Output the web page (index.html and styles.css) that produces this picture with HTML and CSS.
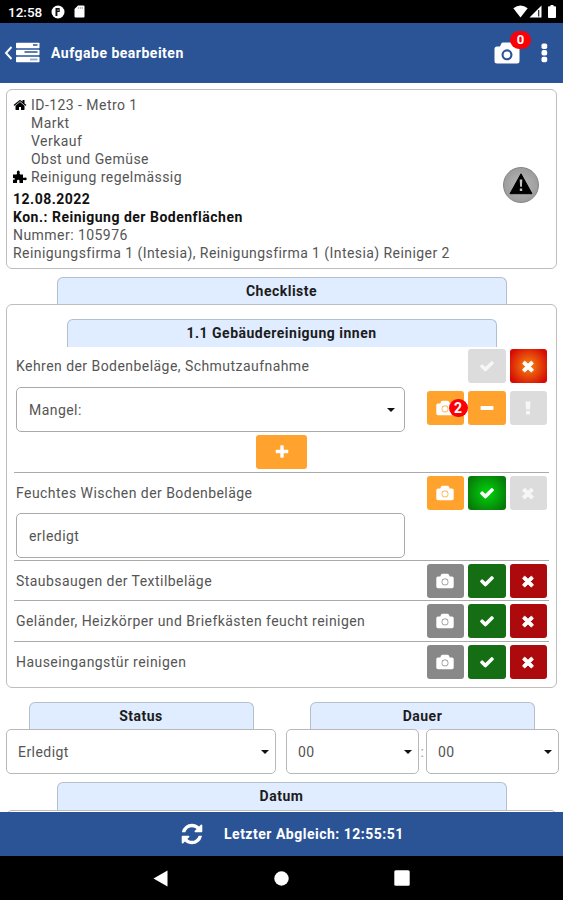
FILE: index.html
```html
<!DOCTYPE html>
<html lang="de">
<head>
<meta charset="utf-8">
<title>Aufgabe bearbeiten</title>
<link rel="stylesheet" href="styles.css">
</head>
<body>
<svg class="defs" width="0" height="0">
  <symbol id="check" viewBox="0 0 1792 1792"><path d="M1671 566q0 40-28 68l-724 724-136 136q-28 28-68 28t-68-28l-136-136-362-362q-28-28-28-68t28-68l136-136q28-28 68-28t68 28l294 295 656-657q28-28 68-28t68 28l136 136q28 28 28 68z"/></symbol>
  <symbol id="times" viewBox="0 0 1792 1792"><path stroke="#fff" stroke-width="90" d="M1490 1322q0 40-28 68l-136 136q-28 28-68 28t-68-28l-294-294-294 294q-28 28-68 28t-68-28l-136-136q-28-28-28-68t28-68l294-294-294-294q-28-28-28-68t28-68l136-136q28-28 68-28t68 28l294 294 294-294q28-28 68-28t68 28l136 136q28 28 28 68t-28 68l-294 294 294 294q28 28 28 68z"/></symbol>
  <symbol id="plus" viewBox="0 0 1792 1792"><path d="M1600 736v192q0 40-28 68t-68 28h-416v416q0 40-28 68t-68 28h-192q-40 0-68-28t-28-68v-416h-416q-40 0-68-28t-28-68v-192q0-40 28-68t68-28h416v-416q0-40 28-68t68-28h192q40 0 68 28t28 68v416h416q40 0 68 28t28 68z"/></symbol>
  <symbol id="minus" viewBox="0 0 16 16"><rect x="1.5" y="6" width="13" height="4" rx="1"/></symbol>
  <symbol id="bang" viewBox="0 0 16 16"><path d="M6 1.5h4q.5 0 .5.6L10 9.5H6L5.500 2.100q0-.6.5-.6zM6 11h4v3.500H6z"/></symbol>
  <symbol id="camera" viewBox="0 0 26 22"><path fill-rule="evenodd" d="M9 .5h8q1.300 0 1.800 1.200L20 4.500h3q2.500 0 2.500 2.500v12q0 2.500-2.500 2.500H3Q.5 21.500.5 19V7Q.5 4.500 3 4.500h3l1.200-2.800Q7.700.5 9 .5zM13 7.300a5.500 5.500 0 1 0 0 11a5.500 5.500 0 0 0 0-11zM13 9.400a3.400 3.400 0 1 1 0 6.800a3.400 3.400 0 0 1 0-6.800z"/></symbol>
  <symbol id="camera-thin" viewBox="0 0 18 16"><path fill-rule="evenodd" d="M6.500.7h5q1 0 1.500 1l.7 1.700H16q1.700 0 1.700 1.700v8.500q0 1.700-1.700 1.700H2Q.3 15.300.3 13.600V5.100Q.3 3.400 2 3.400h2.300L5 1.700q.5-1 1.500-1zM9 5.500a3.400 3.400 0 1 0 0 6.800a3.400 3.400 0 0 0 0-6.800zM9 6.200a2.700 2.700 0 1 1 0 5.400a2.700 2.700 0 0 1 0-5.400z"/></symbol>
</svg>
<div class="app">
  <div class="status">
    <span class="clock">12:58</span>
    <svg class="s-app" width="14" height="14" viewBox="0 0 14 14"><circle cx="7" cy="7" r="6.500" fill="#fff"/><path d="M4.500 3h4.200v4H6.400v4H4.500z" fill="#111"/><path d="M6.500 4.500h1v1.200h-1z" fill="#fff"/></svg>
    <svg width="11" height="13" viewBox="0 0 11 13"><path d="M4 .5h5.500q1 0 1 1v10q0 1-1 1h-8q-1 0-1-1V4z" fill="#fff"/><path d="M4.300 2v2M6.300 2v2M8.300 2v2" stroke="#999" stroke-width=".8"/></svg>
    <span class="grow"></span>
    <svg width="15" height="13" viewBox="0 0 15 13"><path d="M.3 3.300Q7.500-2.300 14.700 3.300L7.500 12.500z" fill="#fff"/></svg>
    <svg class="s-cell" width="13" height="13" viewBox="0 0 13 13"><path d="M.5 12.500L12.500.5v12z" fill="#fff"/><path d="M9.700 5v6.500" stroke="#222" stroke-width="1.200"/></svg>
    <svg class="s-bat" width="8" height="13" viewBox="0 0 8 13"><path d="M2.500 0h3v1.300H7q1 0 1 1V12q0 1-1 1H1q-1 0-1-1V2.300q0-1 1-1h1.500z" fill="#fff"/></svg>
  </div>
  <header class="bar">
    <svg width="36" height="22" viewBox="0 0 36 22"><path d="M7.500 5L2 11l5.500 6" fill="none" stroke="#fff" stroke-width="1.900"/><g fill="#fff"><rect x="12" y=".8" width="23.500" height="5.400" rx=".8"/><rect x="12" y="7.800" width="23.500" height="5.400" rx=".8"/><rect x="12" y="14.800" width="23.500" height="5.400" rx=".8"/></g><path d="M29 3h4.500M20.500 10h13" stroke="#2b5497" stroke-width="1.400"/><path d="M26 17.500h7.500" stroke="#8fa9d3" stroke-width="1.800"/></svg>
    <h1>Aufgabe bearbeiten</h1>
    <span class="grow"></span>
    <span class="cam"><svg width="26" height="22" fill="#fff"><use href="#camera"/></svg><b class="badge">0</b></span>
    <svg class="dots" width="7" height="20" viewBox="0 0 7 20" fill="#fff"><rect x=".5" y=".5" width="5.700" height="5.500" rx="1.800"/><rect x=".5" y="7.100" width="5.700" height="5.500" rx="1.800"/><rect x=".5" y="13.700" width="5.700" height="5.500" rx="1.800"/></svg>
  </header>
  <main>
    <section class="card info">
      <div class="lines">
        <p><svg class="ic" width="14" height="14" viewBox="0 0 1792 1792"><path d="M1472 992v480q0 26-19 45t-45 19h-384v-384h-256v384h-384q-26 0-45-19t-19-45v-480q0-1 .5-3t.5-3l575-474 575 474q1 2 1 6zm223-69l-62 74q-8 9-21 11h-3q-13 0-21-7l-692-577-692 577q-12 8-24 7-13-2-21-11l-62-74q-8-10-7-23.500t11-21.500l719-599q32-26 76-26t76 26l244 204v-195q0-14 9-23t23-9h192q14 0 23 9t9 23v408l219 182q10 8 11 21.500t-7 23.500z"/></svg><span>ID-123 - Metro 1</span></p>
        <p class="in">Markt</p>
        <p class="in">Verkauf</p>
        <p class="in">Obst und Gemüse</p>
        <p><svg class="ic" width="14" height="14" viewBox="0 0 14 14"><path d="M0 4.500h3.500Q4.600 3.800 3.800 2.300Q3.900.5 5.300.5t1.500 1.800Q6 3.800 7.200 4.500H10v3q1 .8 1.800 0q1.700-.4 1.900 1.200t-1.900 1.500q-.8-.9-1.800 0v2.800H6.800q-.8-.9-.3-1.800q.2-1.400-1.200-1.400t-1.300 1.400q.6.900-.3 1.800H0V9.800q1.800.3 1.800-.9T0 8.200z"/></svg><span>Reinigung regelmässig</span></p>
        <p class="strong gap">12.08.2022</p>
        <p class="strong">Kon.: Reinigung der Bodenflächen</p>
        <p>Nummer: 105976</p>
        <p class="firms">Reinigungsfirma 1 (Intesia), Reinigungsfirma 1 (Intesia) Reiniger 2</p>
      </div>
      <span class="warn"><svg width="24" height="22" viewBox="0 0 24 22"><path d="M12 .8L23 20.700H1z" stroke="#000" stroke-linejoin="round"/><path d="M10.700 6.500h2.600l-.4 7.300h-1.800zM10.800 15.500h2.400V18h-2.400z" fill="#c4c4c4"/></svg></span>
    </section>
    <h2 class="tab wide">Checkliste</h2>
    <section class="card list">
      <h2 class="tab inner">1.1 Gebäudereinigung innen</h2>
      <div class="item first">
        <div class="row"><span>Kehren der Bodenbeläge, Schmutzaufnahme</span>
          <div class="btns"><i class="btn off"><svg><use href="#check"/></svg></i><i class="btn hot"><svg><use href="#times"/></svg></i></div></div>
        <div class="row field"><div class="box sel"><span>Mangel:</span><em></em></div>
          <div class="btns"><i class="btn org"><svg class="cm"><use href="#camera-thin"/></svg><b class="badge two">2</b></i><i class="btn org"><svg><use href="#minus"/></svg></i><i class="btn off"><svg><use href="#bang"/></svg></i></div></div>
        <i class="btn org add"><svg><use href="#plus"/></svg></i>
      </div>
      <div class="item second">
        <div class="row"><span>Feuchtes Wischen der Bodenbeläge</span>
          <div class="btns"><i class="btn org"><svg class="cm"><use href="#camera-thin"/></svg></i><i class="btn lit"><svg><use href="#check"/></svg></i><i class="btn off"><svg><use href="#times"/></svg></i></div></div>
        <div class="box">erledigt</div>
      </div>
      <div class="item"><div class="row"><span>Staubsaugen der Textilbeläge</span>
        <div class="btns"><i class="btn gry"><svg class="cm"><use href="#camera-thin"/></svg></i><i class="btn grn"><svg><use href="#check"/></svg></i><i class="btn red"><svg><use href="#times"/></svg></i></div></div></div>
      <div class="item"><div class="row"><span>Geländer, Heizkörper und Briefkästen feucht reinigen</span>
        <div class="btns"><i class="btn gry"><svg class="cm"><use href="#camera-thin"/></svg></i><i class="btn grn"><svg><use href="#check"/></svg></i><i class="btn red"><svg><use href="#times"/></svg></i></div></div></div>
      <div class="item"><div class="row"><span>Hauseingangstür reinigen</span>
        <div class="btns"><i class="btn gry"><svg class="cm"><use href="#camera-thin"/></svg></i><i class="btn grn"><svg><use href="#check"/></svg></i><i class="btn red"><svg><use href="#times"/></svg></i></div></div></div>
    </section>
    <div class="cols">
      <div class="col"><h2 class="tab half">Status</h2><div class="box sel status-box"><span>Erledigt</span><em></em></div></div>
      <div class="col dauer"><h2 class="tab half">Dauer</h2>
        <div class="time"><div class="box sel"><span>00</span><em></em></div><span class="colon">:</span><div class="box sel"><span>00</span><em></em></div></div></div>
    </div>
    <h2 class="tab wide datum">Datum</h2>
    <section class="card"></section>
  </main>
  <footer class="sync">
    <svg width="24" height="24" viewBox="0 0 1792 1792" fill="#fff"><path d="M1639 1056q0 5-1 7-64 268-268 434.500t-478 166.500q-146 0-282.500-55t-243.500-157l-129 129q-19 19-45 19t-45-19-19-45v-448q0-26 19-45t45-19h448q26 0 45 19t19 45-19 45l-137 137q71 66 161 102t187 36q134 0 250-65t186-179q11-17 53-117 8-23 30-23h192q13 0 22.500 9.500t9.500 22.500zm25-800v448q0 26-19 45t-45 19h-448q-26 0-45-19t-19-45 19-45l138-138q-148-137-349-137-134 0-250 65t-186 179q-11 17-53 117-8 23-30 23h-199q-13 0-22.500-9.500t-9.500-22.500v-7q65-268 270-434.500t480-166.500q146 0 284 55.500t245 156.500l130-129q19-19 45-19t45 19 19 45z"/></svg>
    <span>Letzter Abgleich: 12:55:51</span>
  </footer>
  <nav class="nav">
    <svg width="15" height="17" viewBox="0 0 15 17"><path d="M14.500.5v16L.5 8.500z" fill="#fff"/></svg>
    <svg width="15" height="15" viewBox="0 0 15 15"><circle cx="7.500" cy="7.500" r="7.200" fill="#fff"/></svg>
    <svg width="16" height="16" viewBox="0 0 16 16"><rect x=".3" y=".3" width="15.400" height="15.400" rx="1.500" fill="#fff"/></svg>
  </nav>
</div>
</body>
</html>
```
FILE: styles.css
```css
* { box-sizing: border-box; }
body { margin: 0; font: 14px/18px Roboto, sans-serif; letter-spacing: .45px; color: #555; background: #fff; }
h1, h2, p { margin: 0; }
svg { display: block; flex: none; }
.defs { position: absolute; }
.grow { flex: 1; }
.app { height: 900px; display: flex; flex-direction: column; overflow: hidden; }

.status { flex: none; height: 23px; background: #000; color: #fff; display: flex; align-items: center; padding: 0 7px 0 8px; }
.clock { width: 43px; font-size: 13.500px; font-weight: 500; letter-spacing: 0; padding-top: 1px; }
.s-app { margin-right: 9px; }
.s-cell { margin: 0 6px 0 1px; }

.bar { flex: none; height: 60px; background: #2b5497; color: #fff; display: flex; align-items: center; padding: 0 15px 0 4px; }
.bar h1 { font-size: 14px; font-weight: 700; margin-left: 11px; letter-spacing: .5px; }
.cam { position: relative; margin-right: 21px; }
.badge { position: absolute; top: -11px; left: 16px; width: 21px; height: 18px; border-radius: 9px; background: #fb0007; color: #fff; font: 700 13px/18px Roboto, sans-serif; text-align: center; letter-spacing: 0; }
.badge.two { top: 8px; left: 22px; width: 19px; z-index: 1; font-size: 14px; }

main { flex: 1; min-height: 0; overflow: hidden; padding: 6px 6px 0; }
.card { border: 1px solid #bdbdbd; border-radius: 6px; background: #fff; min-height: 40px; }
.info { height: 180px; padding: 6px 17px 0 6px; display: flex; justify-content: space-between; }
.info p { height: 17.900px; display: flex; align-items: center; white-space: nowrap; }
.info .ic { margin-right: 4px; fill: #000; }
.info .in { padding-left: 18px; }
.info .gap { margin-top: 5px; }
.info .strong { letter-spacing: .5px; }
.info .firms { letter-spacing: .43px; }
.strong { color: #111; font-weight: 700; }
.warn { flex: none; align-self: center; width: 36px; height: 36px; border-radius: 50%; border: 1px solid #848484; background: radial-gradient(#b8b8b8, #929292); display: flex; justify-content: center; padding-top: 5px; margin-top: 5px; }

.tab { height: 28px; border: 1px solid #b4bfcc; border-bottom: 0; border-radius: 6px 6px 0 0; background: #e0ecff; color: #1c1c1c; font-size: 14px; line-height: 27px; font-weight: 700; text-align: center; letter-spacing: .5px; }
.tab.wide { width: 450px; margin: 8px auto 0; }
.tab.inner { width: 430px; margin: 0 auto; }
.tab.half { width: 225px; margin: 0 auto; }

.list { height: 384px; padding: 14px 7px 0; margin-top: -1px; }
.row { display: flex; justify-content: space-between; align-items: center; padding: 0 2px; }
.item { height: 40.300px; padding-top: 3px; border-top: 1px solid #aaa; }
.item.first { border: 0; height: 125px; padding-top: 2px; }
.item.second { height: 88px; }
.item.second .box { margin: 3px 0 0 2px; }
.field { align-items: flex-start; margin-top: 4px; }
.field .btns { padding-top: 4px; }
.btns { display: flex; gap: 4px; }
.btn { position: relative; width: 37.500px; height: 34px; border-radius: 3px; display: flex; align-items: center; justify-content: center; font-style: normal; }
.btn svg { width: 16px; height: 16px; fill: #fff; }
.btn .cm { width: 18px; }
.off { background: #dcdcdc; }
.off svg { opacity: .75; }
.org { background: #ffa22e; }
.gry { background: #888; }
.grn { background: #156e13; }
.red { background: #ac0a0c; }
.hot { background: radial-gradient(circle, #f7890f, #d60b05 85%); }
.lit { background: radial-gradient(circle, #00d50a, #087a0a 85%); }
.add { width: 51px; margin: 3px auto 0; }

.box { width: 389px; height: 45px; border: 1px solid #aaa; border-radius: 5px; background: #fff; padding: 0 9px 0 12px; display: flex; align-items: center; }
.sel { justify-content: space-between; }
.sel em { border: 4px solid transparent; border-top: 4.500px solid #111; border-bottom: 0; }
.cols { display: flex; gap: 10px; margin-top: 14px; margin-right: -2px; }
.col { width: 270px; }
.col .box { width: 100%; margin-top: -1px; padding: 0 6px 0 11px; border-color: #b8b8b8; }
.dauer { width: 273px; }
.dauer .tab { margin-left: 24px; }
.time { display: flex; align-items: center; }
.time .box { flex: 1; width: auto; }
.colon { width: 7px; text-align: center; color: #999; }
.tab.datum { margin-top: 8px; }

.sync { flex: none; height: 44px; background: #2b5497; color: #fff; font-weight: 700; display: flex; align-items: center; gap: 20px; padding-left: 180px; letter-spacing: .5px; }
.nav { flex: none; height: 44px; background: #000; display: flex; align-items: center; justify-content: center; gap: 105.500px; }
```
